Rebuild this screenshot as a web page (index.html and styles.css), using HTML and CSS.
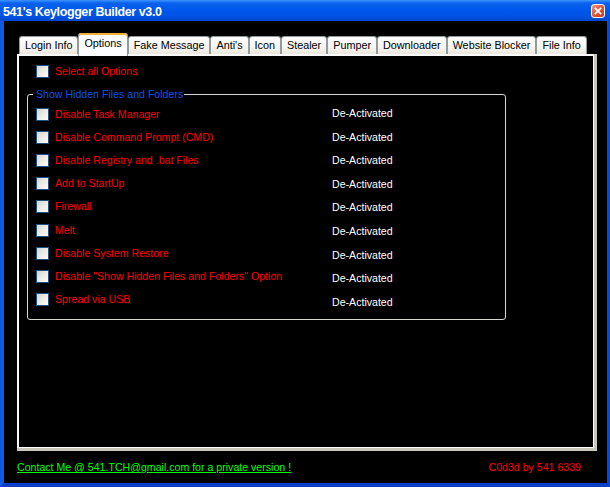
FILE: index.html
```html
<!DOCTYPE html>
<html>
<head>
<meta charset="utf-8">
<title>541's Keylogger Builder v3.0</title>
<link rel="stylesheet" href="styles.css">
</head>
<body>
<div class="window">
  <div class="titlebar">
    <span class="title">541's Keylogger Builder v3.0</span>
    <span class="close">
      <svg width="14" height="14" viewBox="0 0 14 14"><path d="M4 4 L10 10 M10 4 L4 10" stroke="#fff" stroke-width="2" stroke-linecap="square"/></svg>
    </span>
  </div>
  <div class="client">
    <div class="tabs">
      <div class="tab">Login Info</div>
      <div class="tab active">Options</div>
      <div class="tab">Fake Message</div>
      <div class="tab">Anti's</div>
      <div class="tab">Icon</div>
      <div class="tab">Stealer</div>
      <div class="tab">Pumper</div>
      <div class="tab">Downloader</div>
      <div class="tab">Website Blocker</div>
      <div class="tab">File Info</div>
    </div>
    <div class="panel">
      <label class="check"><span class="box"></span>Select all Options</label>
      <fieldset class="group">
        <legend>Show Hidden Files and Folders</legend>
        <div class="rows">
          <div class="opts">
            <label class="check"><span class="box"></span>Disable Task Manager</label>
            <label class="check"><span class="box"></span>Disable Command Prompt (CMD)</label>
            <label class="check"><span class="box"></span>Disable Registry and .bat Files</label>
            <label class="check"><span class="box"></span>Add to StartUp</label>
            <label class="check"><span class="box"></span>Firewall</label>
            <label class="check"><span class="box"></span>Melt</label>
            <label class="check"><span class="box"></span>Disable System Restore</label>
            <label class="check"><span class="box"></span>Disable "Show Hidden Files and Folders" Option</label>
            <label class="check"><span class="box"></span>Spread via USB</label>
          </div>
          <div class="status">
            <div>De-Activated</div>
            <div>De-Activated</div>
            <div>De-Activated</div>
            <div>De-Activated</div>
            <div>De-Activated</div>
            <div>De-Activated</div>
            <div>De-Activated</div>
            <div>De-Activated</div>
            <div>De-Activated</div>
          </div>
        </div>
      </fieldset>
    </div>
    <div class="footer">
      <span class="contact">Contact Me @ 541.TCH@gmail.com for a private version !</span>
      <span class="credit">C0d3d by 541 6339</span>
    </div>
  </div>
</div>
</body>
</html>
```
FILE: styles.css
```css
* { box-sizing: border-box; }
html, body { margin: 0; padding: 0; }
body {
  width: 610px;
  height: 487px;
  overflow: hidden;
  font-family: "Liberation Sans", Arial, sans-serif;
  font-size: 10.6px;
  background: #000;
}
.window {
  width: 610px;
  height: 487px;
  display: flex;
  flex-direction: column;
}
.titlebar {
  height: 21px;
  flex: none;
  display: flex;
  justify-content: space-between;
  align-items: flex-start;
  padding: 0 5px 0 3px;
  background: linear-gradient(to bottom, #3d95ff 0px, #0a62ec 3px, #0058ee 9px, #0053e4 16px, #0046cc 21px);
}
.title {
  color: #fff;
  font-weight: bold;
  font-size: 12.5px;
  letter-spacing: -0.4px;
  line-height: 13px;
  margin-top: 6px;
}
.close {
  width: 14px;
  height: 14px;
  margin-top: 4px;
  border: 1px solid #fff;
  border-radius: 3px;
  background: linear-gradient(135deg, #f2967a 0%, #e0583a 45%, #c23d1a 100%);
  display: flex;
}
.close svg { width: 12px; height: 12px; }
.client {
  flex: 1;
  background: #000;
  border-left: 4px solid #0e58e6;
  border-right: 3px solid #0b48d6;
  border-bottom: 4px solid #0a3fc6;
  padding: 12px 10px 0 13px;
  display: flex;
  flex-direction: column;
}
.tabs {
  display: flex;
  align-items: flex-end;
  margin-left: 2px;
}
.tab {
  height: 18px;
  padding: 0 5px;
  border: 1px solid #919b9c;
  border-bottom: none;
  border-radius: 3px 3px 0 0;
  background: linear-gradient(to bottom, #fefefe, #f6f5f1 60%, #e9e7de);
  color: #000;
  font-size: 10.8px;
  line-height: 16px;
  white-space: nowrap;
}
.tab.active {
  height: 23px;
  margin-bottom: -2px;
  position: relative;
  z-index: 1;
  padding: 2px 5px 0;
  border-top: none;
  background: #fcfcfe;
  box-shadow: inset 0 2px 0 #f5b03c;
  border-radius: 3px 3px 0 0;
}
.panel {
  width: 577px;
  height: 394px;
  flex: none;
  background: #000;
  border-style: solid;
  border-width: 2px 1px 1px 2px;
  border-color: #fafafa #ffffff #ffffff #fafafa;
  box-shadow: 3px 0 0 #c9c7ba, 0 3px 0 #c9c7ba, 3px 3px 0 #c9c7ba;
  padding: 9px 0 0 17px;
}
.check {
  display: flex;
  align-items: center;
  gap: 6px;
  color: #ff0000;
  height: 13px;
  line-height: 13px;
  white-space: nowrap;
}
.box {
  width: 13px;
  height: 13px;
  flex: none;
  border: 1px solid #1c5180;
  background: linear-gradient(135deg, #d6d6d0 0%, #ecebe6 50%, #fcfcfb 100%);
}
.group {
  margin: 9px 0 0 -9px;
  width: 479px;
  min-width: 0;
  padding: 0 0 5px 8px;
  border: 1px solid #d8d7cf;
  border-radius: 3px;
}
.group legend {
  padding: 0 1px 0 3px;
  margin-left: -3px;
  color: #0a52ee;
  font-size: 10.6px;
  line-height: 14px;
}
.rows {
  display: flex;
}
.opts {
  width: 296px;
  display: flex;
  flex-direction: column;
  padding-top: 2px;
}
.opts .check { height: 23.1px; }
.status {
  display: flex;
  flex-direction: column;
  color: #fff;
  padding-top: 1px;
}
.status div {
  height: 23.6px;
  line-height: 23.6px;
}
.footer {
  display: flex;
  justify-content: space-between;
  margin-top: 13px;
  padding-right: 16px;
  line-height: 13px;
}
.contact {
  color: #00ff00;
  text-decoration: underline;
}
.credit { color: #ff0000; }
```
